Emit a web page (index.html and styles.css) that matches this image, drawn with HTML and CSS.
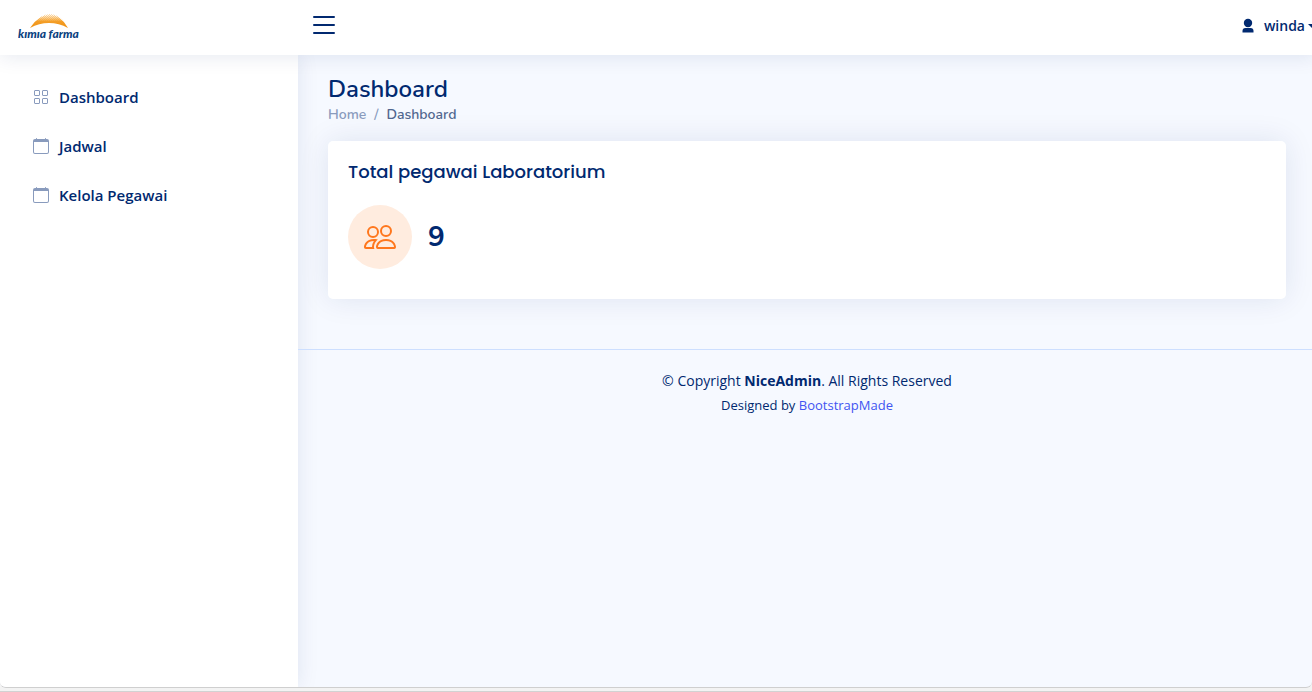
FILE: index.html
```html
<!DOCTYPE html>
<html lang="id">
<head>
<meta charset="utf-8">
<title>Dashboard</title>
<link rel="stylesheet" href="styles.css">
</head>
<body>
<div class="viewport">
  <div class="app">
    <header class="header">
      <div class="brand">
        <a href="#" aria-label="kimia farma">
          <svg class="logo" width="66" height="30" viewBox="0 0 66 30">
            <defs>
              <pattern id="dots" width="2" height="2" patternUnits="userSpaceOnUse">
                <rect width="1" height="1" fill="#f39a1e"/><rect x="1" y="1" width="1" height="1" fill="#f39a1e"/>
              </pattern>
              <linearGradient id="sun" x1="0" y1="0" x2="0" y2="1">
                <stop offset="0" stop-color="#f8a835" stop-opacity=".1"/>
                <stop offset=".5" stop-color="#f39a1e" stop-opacity=".95"/>
                <stop offset="1" stop-color="#ef8f0c"/>
              </linearGradient>
            </defs>
            <path d="M16 11Q22 1 32 1Q42 1 47 11Q40 8 32 8Q23 8 16 11Z" fill="url(#dots)" opacity=".4"/>
            <path d="M12 15Q20 2 32 2Q43 2 50 15Q41 10 31 10Q21 10 12 15Z" fill="url(#sun)"/>
            <text class="logo-text" x="0" y="25">kımıa farma</text>
          </svg>
        </a>
      </div>
      <button class="toggle" type="button" aria-label="Toggle sidebar">
        <svg width="32" height="32" viewBox="0 0 32 32"><path d="M6 8h20M6 16h20M6 24h20" fill="none" stroke="currentColor" stroke-width="2" stroke-linecap="round"/></svg>
      </button>
      <button class="profile" type="button">
        <svg width="12" height="16" viewBox="0 0 12 16" fill="currentColor"><circle cx="6" cy="5" r="4.2"/><path d="M.5 14.5V13Q.5 10 3.5 10h5Q11.500 10 11.500 13v1.500Z"/></svg>
        <span>winda</span>
        <i class="caret"></i>
      </button>
    </header>
    <div class="body">
      <nav class="sidebar">
        <a class="nav-link" href="#">
          <svg width="16" height="16" viewBox="0 0 16 16" fill="none" stroke="currentColor"><rect x="1.500" y="1.500" width="5" height="5" rx=".5"/><rect x="9.500" y="1.500" width="5" height="5" rx=".5"/><rect x="1.500" y="9.500" width="5" height="5" rx=".5"/><rect x="9.500" y="9.500" width="5" height="5" rx=".5"/></svg>
          <span>Dashboard</span>
        </a>
        <a class="nav-link" href="#">
          <svg width="16" height="16" viewBox="0 0 16 16" fill="currentColor"><path d="M3.500 0a.5.5 0 0 1 .5.5V1h8V.5a.5.5 0 0 1 1 0V1h1a2 2 0 0 1 2 2v11a2 2 0 0 1-2 2H2a2 2 0 0 1-2-2V3a2 2 0 0 1 2-2h1V.5a.5.5 0 0 1 .5-.5zM1 4v10a1 1 0 0 0 1 1h12a1 1 0 0 0 1-1V4H1z"/></svg>
          <span>Jadwal</span>
        </a>
        <a class="nav-link" href="#">
          <svg width="16" height="16" viewBox="0 0 16 16" fill="currentColor"><path d="M3.500 0a.5.5 0 0 1 .5.5V1h8V.5a.5.5 0 0 1 1 0V1h1a2 2 0 0 1 2 2v11a2 2 0 0 1-2 2H2a2 2 0 0 1-2-2V3a2 2 0 0 1 2-2h1V.5a.5.5 0 0 1 .5-.5zM1 4v10a1 1 0 0 0 1 1h12a1 1 0 0 0 1-1V4H1z"/></svg>
          <span>Kelola Pegawai</span>
        </a>
      </nav>
      <div class="content">
        <main class="main">
          <h1 class="title">Dashboard</h1>
          <ol class="breadcrumb">
            <li><a href="#">Home</a></li>
            <li class="active">Dashboard</li>
          </ol>
          <section class="card">
            <h2 class="card-title">Total pegawai Laboratorium</h2>
            <div class="stat">
              <div class="stat-icon">
                <svg width="32" height="32" viewBox="0 0 16 16" fill="currentColor"><path d="M15 14s1 0 1-1-1-4-5-4-5 3-5 4 1 1 1 1h8zm-7.978-1A.261.261 0 0 1 7 12.996c.001-.264.167-1.030.76-1.720C8.312 10.629 9.282 10 11 10c1.717 0 2.687.63 3.240 1.276.593.69.758 1.457.76 1.720l-.008.002a.274.274 0 0 1-.014.002H7.022zM11 7a2 2 0 1 0 0-4 2 2 0 0 0 0 4zm3-2a3 3 0 1 1-6 0 3 3 0 0 1 6 0zM6.936 9.280a5.880 5.880 0 0 0-1.230-.247A7.350 7.350 0 0 0 5 9c-4 0-5 3-5 4 0 .667.333 1 1 1h4.216A2.238 2.238 0 0 1 5 13c0-1.010.377-2.042 1.090-2.904.243-.294.526-.569.846-.816zM4.920 10A5.493 5.493 0 0 0 4 13H1c0-.26.164-1.030.76-1.724.545-.636 1.492-1.256 3.160-1.275zM1.500 5.500a3 3 0 1 1 6 0 3 3 0 0 1-6 0zm3-2a2 2 0 1 0 0 4 2 2 0 0 0 0-4z"/></svg>
              </div>
              <strong class="stat-value">9</strong>
            </div>
          </section>
        </main>
        <footer class="footer">
          <div class="copyright">© Copyright <strong>NiceAdmin</strong>. All Rights Reserved</div>
          <div class="credits">Designed by <a href="#">BootstrapMade</a></div>
        </footer>
      </div>
    </div>
  </div>
</div>
<div class="edge"></div>
</body>
</html>
```
FILE: styles.css
```css
* { box-sizing: border-box; }

body {
  display: flex;
  flex-direction: column;
  min-height: 100vh;
  margin: 0;
  overflow: hidden;
  background: #f3f3f3;
  color: #012970;
  font-family: "Open Sans", sans-serif;
}

a { color: inherit; text-decoration: none; }
button { border: 0; padding: 0; background: none; color: inherit; font: inherit; cursor: pointer; }
svg { display: block; flex: none; }

.viewport {
  display: flex;
  flex: 1;
  overflow: hidden;
  background: #f6f9ff;
  border-bottom: 1px solid #cfcfcf;
  border-radius: 0 0 6px 6px;
}

/* The content runs slightly past the right edge of the window. */
.app {
  display: flex;
  flex: 1;
  flex-direction: column;
  margin-right: -4px;
}

.header {
  position: relative;
  z-index: 2;
  display: flex;
  align-items: center;
  height: 55px;
  background: #fff;
  box-shadow: 0 2px 20px rgba(1, 41, 112, .1);
}

.brand { width: 308px; padding-left: 18px; }
.logo-text { fill: #0b427f; font: italic 900 12px Lato, sans-serif; }
.toggle { margin-bottom: 5px; }

.profile {
  display: flex;
  align-items: center;
  margin: 0 0 4px auto;
  font-size: 14px;
  font-weight: 600;
}
.profile span { margin-left: 10px; }

.caret {
  margin-left: 3px;
  border: 4px solid transparent;
  border-top-color: currentColor;
  border-bottom: 0;
}

.body { display: flex; flex: 1; }

.sidebar {
  width: 298px;
  padding: 20px 20px 20px 18px;
  background: #fff;
  box-shadow: 0 0 20px rgba(1, 41, 112, .1);
}

.nav-link {
  display: flex;
  align-items: center;
  gap: 10px;
  height: 44px;
  margin-bottom: 5px;
  padding: 0 15px;
  font-size: 15px;
  font-weight: 600;
}
.nav-link svg { color: #899bbd; }

.content { flex: 1; }
.main { padding: 20px 30px; }

.title {
  margin: 0;
  font: 600 24px/29px Nunito, "Open Sans", sans-serif;
}

.breadcrumb {
  display: flex;
  margin: 0 0 16px;
  padding: 0;
  list-style: none;
  color: #899bbd;
  font: 600 14px/21px Nunito, "Open Sans", sans-serif;
}
.breadcrumb .active { color: #51678f; }
.breadcrumb .active::before { content: "/"; padding: 0 8px; color: #899bbd; }

.card {
  margin-bottom: 30px;
  padding: 20px 20px 30px;
  background: #fff;
  border-radius: 5px;
  box-shadow: 0 0 30px rgba(1, 41, 112, .1);
}

.card-title {
  margin: 0 0 22px;
  font: 500 18px/22px Poppins, Inter, sans-serif;
}

.stat { display: flex; align-items: center; gap: 16px; }

.stat-icon {
  display: grid;
  place-items: center;
  width: 64px;
  height: 64px;
  border-radius: 50%;
  background: #ffecdf;
  color: #ff771d;
}

.stat-value { font: 700 28px/34px Nunito, "Open Sans", sans-serif; }

.footer {
  padding: 20px 0;
  border-top: 1px solid #cddfff;
  text-align: center;
  font-size: 14px;
  line-height: 22px;
}

.credits { padding-top: 3px; font-size: 13px; line-height: 20px; }
.credits a { color: #4154f1; }

.edge {
  height: 4px;
  border-bottom: 1px solid #d2d2d2;
}
```
